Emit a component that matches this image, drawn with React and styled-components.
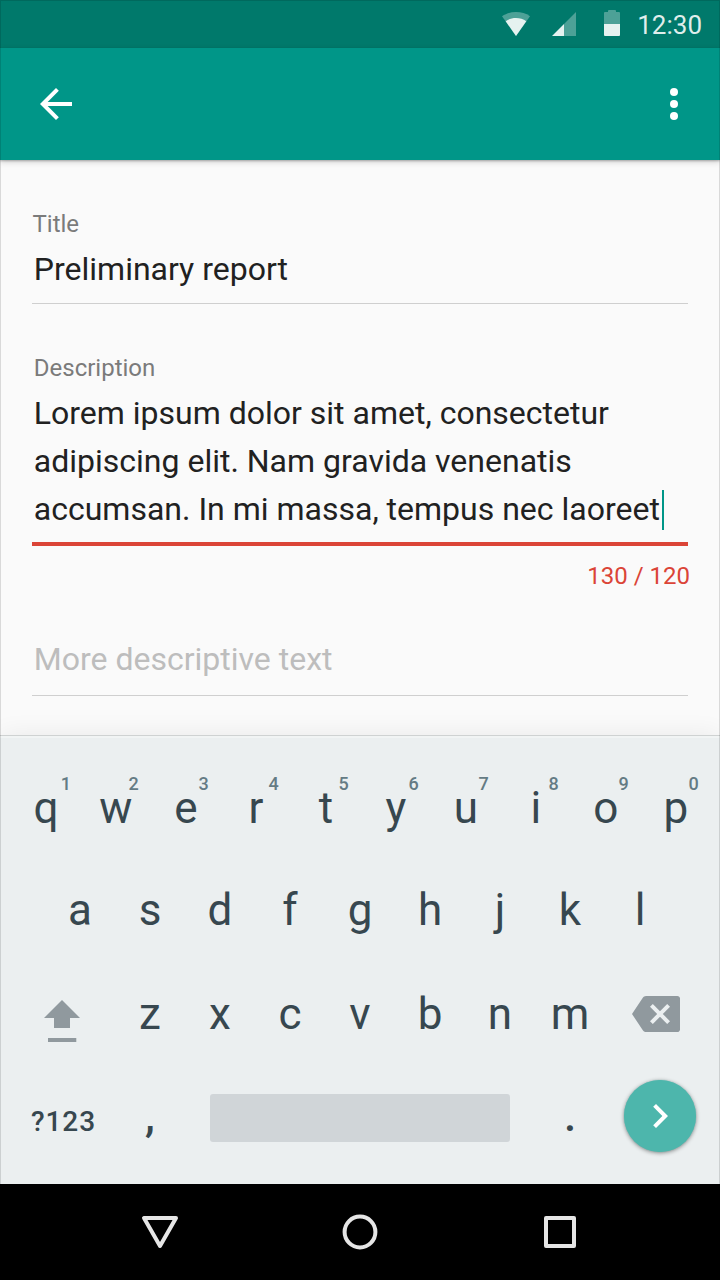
import React from "react";
import styled, { createGlobalStyle } from "styled-components";

const GlobalStyle = createGlobalStyle`
  *, *::before, *::after { box-sizing: border-box; }
  body { margin: 0; background: #fafafa; }
`;

const Screen = styled.div`
  position: relative;
  display: flex;
  flex-direction: column;
  width: 720px;
  height: 1280px;
  overflow: hidden;
  background: #fafafa;
  font-family: Roboto, "Liberation Sans", sans-serif;
  color: #212121;

  &::after {
    content: "";
    position: absolute;
    inset: 0;
    border: 1px solid rgba(0, 0, 0, 0.13);
    pointer-events: none;
    z-index: 5;
  }
`;

const StatusBar = styled.div`
  display: flex;
  align-items: center;
  justify-content: flex-end;
  height: 48px;
  padding-right: 18px;
  background: #00796b;
`;

const StatusIcon = styled.svg`
  display: block;
  width: ${({ $width }) => $width}px;
  height: 48px;
  margin-right: ${({ $after }) => $after}px;
`;

const Clock = styled.span`
  padding-top: 2px;
  font-size: 26px;
  line-height: 30px;
  color: rgba(255, 255, 255, 0.88);
`;

const AppBar = styled.header`
  position: relative;
  z-index: 1;
  display: flex;
  align-items: center;
  justify-content: space-between;
  height: 112px;
  padding: 0 22px 0 32px;
  background: #009688;
  box-shadow: 0 1px 2px rgba(0, 0, 0, 0.25), 0 2px 6px rgba(0, 0, 0, 0.17);
`;

const Icon = styled.svg`
  display: block;
  flex: none;
  width: 48px;
  height: 48px;
  fill: ${({ $color }) => $color || "#fff"};
`;

const Form = styled.main`
  display: flex;
  flex-direction: column;
  height: 575px;
  padding: 0 32px;
`;

const Field = styled.section`
  display: flex;
  flex-direction: column;
  padding-top: ${({ $top }) => $top}px;
`;

const Label = styled.span`
  padding-left: ${({ $inset }) => $inset}px;
  margin-bottom: 7px;
  font-size: 24px;
  line-height: 28px;
  color: #7b7b7b;
`;

const Value = styled.div`
  padding: 0 0 ${({ $bottom }) => $bottom}px 1.8px;
  border-bottom: ${({ $error }) => ($error ? "4px solid #db4437" : "1px solid #cfcfcf")};
  font-size: 32px;
  line-height: 48px;
  white-space: nowrap;
  color: ${({ $hint }) => ($hint ? "#bdbdbd" : "#212121")};
`;

const TextLine = styled.div`
  display: flex;
  align-items: center;
  height: 48px;
`;

const Caret = styled.span`
  width: 2px;
  height: 40px;
  margin: 2px 0 0 1.7px;
  background: #009688;
`;

const Counter = styled.span`
  align-self: flex-end;
  margin: 16px -2px 0 0;
  font-size: 24px;
  line-height: 28px;
  color: #db4437;
`;

const Keyboard = styled.section`
  display: flex;
  flex-direction: column;
  height: 449px;
  padding-top: 44px;
  border-top: 1px solid #cfd2d2;
  background: linear-gradient(#f1f4f4 0 2px, #ebeff0 2px);
  box-shadow: 0 0 24px rgba(0, 0, 0, 0.07);
  color: #37474f;
`;

const KeyRow = styled.div`
  display: flex;
  align-items: center;
  height: ${({ $height }) => $height || 52}px;
  margin-top: ${({ $gap }) => $gap || 0}px;
  padding-left: ${({ $left }) => $left}px;
`;

const Key = styled.span`
  position: relative;
  flex: none;
  width: 70px;
  font-size: 44px;
  line-height: 52px;
  text-align: center;
`;

const KeyDigit = styled.sup`
  position: absolute;
  top: -9px;
  left: ${({ $left }) => $left}px;
  width: 20px;
  font-size: 18px;
  font-weight: 500;
  line-height: 21px;
  color: #647b84;
`;

const ShiftIcon = styled(Icon)`
  height: 52px;
  margin-right: 29px;
  overflow: visible;
`;

const DeleteIcon = styled(Icon)`
  margin-left: 27px;
`;

const SymbolsKey = styled.span`
  width: 84px;
  padding-top: 11px;
  font-size: 28px;
  font-weight: 500;
  line-height: 33px;
  letter-spacing: 0.9px;
`;

const PunctuationKey = styled.span`
  width: ${({ $width }) => $width}px;
  padding-left: ${({ $inset }) => $inset || 0}px;
  font-size: 44px;
  font-weight: 500;
  line-height: 52px;
  text-align: center;
`;

const SpaceKey = styled.span`
  width: 300px;
  height: 48px;
  margin: 4px 0 0 25px;
  border-radius: 3px;
  background: #d0d5d8;
`;

const NextKey = styled.span`
  display: flex;
  align-items: center;
  justify-content: center;
  width: 72px;
  height: 72px;
  border-radius: 50%;
  background: #4db6ac;
  box-shadow: 0 0 1px rgba(77, 182, 172, 0.8), 0 1px 4px rgba(0, 0, 0, 0.45);
`;

const NavBar = styled.nav`
  display: flex;
  align-items: center;
  justify-content: center;
  gap: 152px;
  height: 96px;
  background: #000;
`;

const NavIcon = styled.svg`
  display: block;
  width: 48px;
  height: 48px;
  fill: none;
  stroke: #e6e6e6;
  stroke-width: 4;
  stroke-linejoin: round;
`;

const TOP_KEYS = ["q1", "w2", "e3", "r4", "t5", "y6", "u7", "i8", "o9", "p0"];

export default function App() {
  return (
    <Screen>
      <GlobalStyle />
      <StatusBar>
        <StatusIcon $width={28} $after={22} viewBox="0 0 28 48">
          <path d="M0 16.2C4 13.4 8.8 12 14 12s10 1.4 14 4.2L14 36z" fill="#fff" fillOpacity=".3" />
          <path d="M3.7 21.2C6.7 19.1 10.2 18 14 18s7.300 1.100 10.300 3.200L14 36z" fill="#fff" fillOpacity=".86" />
        </StatusIcon>
        <StatusIcon $width={24} $after={28} viewBox="0 0 24 48">
          <path d="M24 12v24H12V24z" fill="#fff" fillOpacity=".3" />
          <path d="M12 24v12H0z" fill="#fff" fillOpacity=".9" />
        </StatusIcon>
        <StatusIcon $width={16} $after={17} viewBox="0 0 16 48">
          <path d="M0 24V13q0-1 1-1h3v-1q0-1 1-1h6q1 0 1 1v1h3q1 0 1 1v11z" fill="#fff" fillOpacity=".3" />
          <path d="M0 24h16v11q0 1-1 1H1q-1 0-1-1z" fill="#fff" fillOpacity=".9" />
        </StatusIcon>
        <Clock>12:30</Clock>
      </StatusBar>

      <AppBar>
        <Icon viewBox="0 0 24 24">
          <path d="M20 11H7.830l5.590-5.590L12 4l-8 8 8 8 1.410-1.410L7.830 13H20z" />
        </Icon>
        <Icon viewBox="0 0 24 24">
          <circle cx="12" cy="6" r="2" />
          <circle cx="12" cy="12" r="2" />
          <circle cx="12" cy="18" r="2" />
        </Icon>
      </AppBar>

      <Form>
        <Field $top={50}>
          <Label $inset={0.5}>Title</Label>
          <Value $bottom={10}>Preliminary report</Value>
        </Field>
        <Field $top={50}>
          <Label $inset={1.8}>Description</Label>
          <Value $bottom={9} $error>
            <TextLine>Lorem ipsum dolor sit amet, consectetur</TextLine>
            <TextLine>adipiscing elit. Nam gravida venenatis</TextLine>
            <TextLine>
              accumsan. In mi massa, tempus nec laoreet
              <Caret />
            </TextLine>
          </Value>
          <Counter>130 / 120</Counter>
        </Field>
        <Field $top={45}>
          <Value $bottom={12} $hint>More descriptive text</Value>
        </Field>
      </Form>

      <Keyboard>
        <KeyRow $left={10.9} $gap={2}>
          {TOP_KEYS.map(([letter, digit]) => (
            <Key key={letter}>
              {letter}
              <KeyDigit $left={digit === "1" ? 45 : 42.7}>{digit}</KeyDigit>
            </Key>
          ))}
        </KeyRow>
        <KeyRow $left={45} $gap={50}>
          {[..."asdfghjkl"].map((letter) => (
            <Key key={letter}>{letter}</Key>
          ))}
        </KeyRow>
        <KeyRow $left={38} $gap={52}>
          <ShiftIcon viewBox="0 0 48 52" $color="#90999e">
            <path d="M24 12l18 18h-10v10H16V30H6z" />
            <path d="M10 50h28.300v4H10z" />
          </ShiftIcon>
          {[..."zxcvbnm"].map((letter) => (
            <Key key={letter}>{letter}</Key>
          ))}
          <DeleteIcon viewBox="0 0 24 24" $color="#90999e">
            <path d="M22.700 3H7c-.690 0-1.230.350-1.590.880L0 12l5.410 8.110c.360.530.900.890 1.590.890h15.700c.700 0 1.300-.600 1.300-1.300V4.300c0-.700-.600-1.300-1.300-1.300zM19 15.590L17.590 17 14 13.410 10.410 17 9 15.590 12.590 12 9 8.410 10.410 7 14 10.590 17.590 7 19 8.410 15.410 12z" />
          </DeleteIcon>
        </KeyRow>
        <KeyRow $left={31} $gap={40} $height={72}>
          <SymbolsKey>?123</SymbolsKey>
          <PunctuationKey $width={70}>,</PunctuationKey>
          <SpaceKey />
          <PunctuationKey $width={114} $inset={6}>.</PunctuationKey>
          <NextKey>
            <Icon viewBox="0 0 24 24">
              <path d="M10 6L8.590 7.410 13.170 12l-4.580 4.590L10 18l6-6z" />
            </Icon>
          </NextKey>
        </KeyRow>
      </Keyboard>

      <NavBar>
        <NavIcon viewBox="0 0 48 48">
          <path d="M8 10h32L24 38z" />
        </NavIcon>
        <NavIcon viewBox="0 0 48 48">
          <circle cx="24" cy="24" r="15.400" />
        </NavIcon>
        <NavIcon viewBox="0 0 48 48">
          <path d="M10 10h28v28H10z" />
        </NavIcon>
      </NavBar>
    </Screen>
  );
}
